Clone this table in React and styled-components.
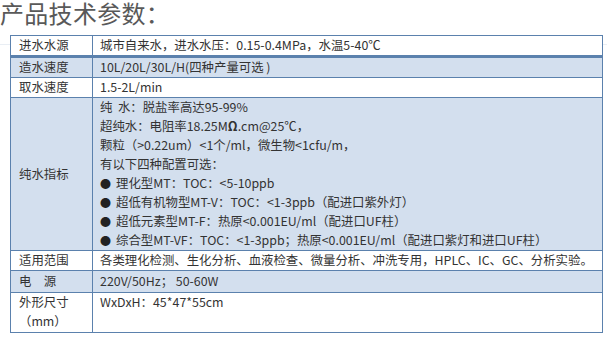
import React from 'react';
import styled, { createGlobalStyle } from 'styled-components';

const GlobalStyle = createGlobalStyle`
    body{
        margin: 0;
        background: #fff;
        font-family: "Noto Sans CJK SC", "Noto Sans", sans-serif;
    }
`;

const rows = [
    { label: '进水水源', value: '城市自来水，进水水压：0.15-0.4MPa，水温5-40℃', height: 20, thick: true },
    { label: '造水速度', value: '10L/20L/30L/H(四种产量可选 )', height: 19, shade: true },
    { label: '取水速度', value: '1.5-2L/min', height: 20 },
];

const tailRows = [
    { label: '适用范围', value: '各类理化检测、生化分析、血液检查、微量分析、冲洗专用，HPLC、IC、GC、分析实验。', height: 20 },
    { label: '电\u3000源', value: '220V/50Hz； 50-60W', height: 22, shade: true },
];

function App() {
    return (
        <PageStyled>
            <GlobalStyle />
            <h2>产品技术参数：</h2>
            <SpecTable>
                <colgroup>
                    <col style={{ width: 82 }} />
                    <col />
                </colgroup>
                <tbody>
                    {rows.map((r) => (
                        <Row key={r.label} $shade={r.shade} $thick={r.thick} $h={r.height}>
                            <th>{r.label}</th>
                            <td>{r.value}</td>
                        </Row>
                    ))}
                    <Row $shade $h={153}>
                        <th>纯水指标</th>
                        <td>
                            <Line>纯&nbsp;&nbsp;水：脱盐率高达95-99%</Line>
                            <Line>超纯水：电阻率18.25M<b>Ω</b>.cm@25℃，</Line>
                            <Line>颗粒（&gt;0.22um）&lt;1个/ml，微生物&lt;1cfu/m，</Line>
                            <Line>有以下四种配置可选：</Line>
                            <Bullet>理化型MT：TOC：&lt;5-10ppb</Bullet>
                            <Bullet>超低有机物型MT-V：TOC：&lt;1-3ppb（配进口紫外灯）</Bullet>
                            <Bullet>超低元素型MT-F：热原&lt;0.001EU/ml（配进口UF柱）</Bullet>
                            <Bullet>综合型MT-VF：TOC：&lt;1-3ppb；热原&lt;0.001EU/ml（配进口紫灯和进口UF柱）</Bullet>
                        </td>
                    </Row>
                    {tailRows.map((r) => (
                        <Row key={r.label} $shade={r.shade} $h={r.height}>
                            <th>{r.label}</th>
                            <td>{r.value}</td>
                        </Row>
                    ))}
                    <Row $h={40} $top>
                        <th>外形尺寸<br />（mm）</th>
                        <td>WxDxH：45*47*55cm</td>
                    </Row>
                </tbody>
            </SpecTable>
        </PageStyled>
    );
}

const PageStyled = styled.div`
    width: 607px;
    height: 345px;
    overflow: hidden;
    background: linear-gradient(to bottom, transparent 44px, #e9eef4 44px, #e9eef4 45px, transparent 45px);
    h2{
        margin: 0;
        height: 35px;
        font-size: 24px;
        font-weight: 400;
        line-height: 26px;
        color: #595959;
        letter-spacing: 0.3px;
    }
`;

const SpecTable = styled.table`
    margin-left: 10px;
    width: 593px;
    border-collapse: collapse;
    table-layout: fixed;
    font-size: 12.4px;
    color: #333;
    line-height: 19px;
`;

const Row = styled.tr`
    height: ${(p) => p.$h}px;
    background: ${(p) => (p.$shade ? '#d3dfee' : '#fff')};
    th, td{
        border: 1px solid #5b81ad;
        border-bottom-width: ${(p) => (p.$thick ? '3px' : '1px')};
        padding: 0 7px;
        text-align: left;
        font-weight: 400;
        vertical-align: ${(p) => (p.$top ? 'top' : 'middle')};
        white-space: nowrap;
    }
    th{
        padding-left: 8px;
    }
    b{
        font-weight: 700;
    }
`;

const Line = styled.div`
    height: 19px;
`;

const Bullet = styled(Line)`
    &::before{
        content: '●';
        margin-right: 5px;
        font-size: 11px;
        color: #222;
    }
`;

export default App;
